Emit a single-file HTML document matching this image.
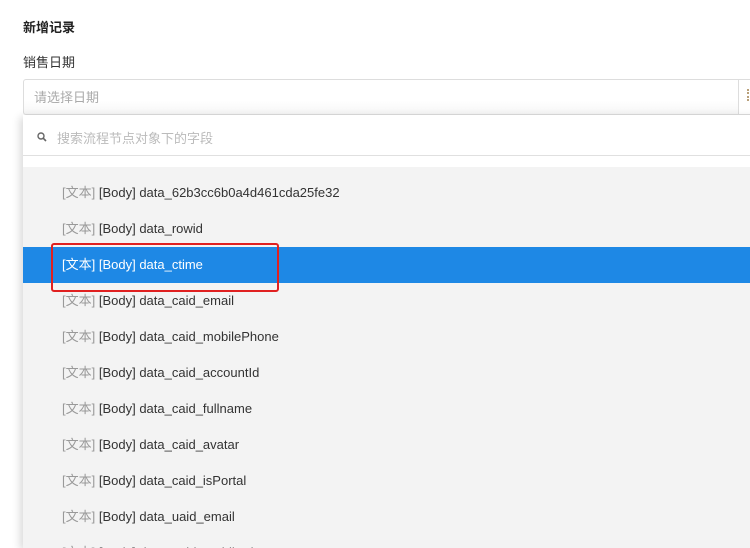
<!DOCTYPE html>
<html style="overflow:hidden"><head><meta charset="utf-8"><style>
*{margin:0;padding:0;box-sizing:border-box}
html,body{width:750px;height:548px;overflow:hidden}
body{background:#fff;font-family:"Liberation Sans","Noto Sans CJK SC",sans-serif;position:relative;color:#333}
.t{position:absolute;left:23px;top:17px;font-size:13px;font-weight:bold;color:#222}
.l{position:absolute;left:23px;top:52px;font-size:13px;color:#333}
.inp{position:absolute;left:23px;top:79px;width:716px;height:36px;border:1px solid #ddd;border-radius:3px 0 0 3px;background:linear-gradient(#fff 60%,#f6f6f6);font-size:13px;color:#aaa;padding:7px 10px}
.side{position:absolute;left:739px;top:79px;width:20px;height:36px;border-top:1px solid #ddd;border-bottom:1px solid #ddd}
.side i{position:absolute;left:8px;top:9px;width:3px;height:12px;border-left:2px dotted #b9a07a}
.dd{position:absolute;left:23px;top:115px;width:740px;height:433px;overflow:hidden;background:#f3f3f3;box-shadow:-3px 2px 8px rgba(0,0,0,.15)}
.sr{height:41px;background:#fff;border-bottom:1px solid #e0e0e0;font-size:13px;color:#bbb;padding:13px 0 0 34px;position:relative}
.sr svg{position:absolute;left:14px;top:17px}
.gap{height:11px;background:#fff}
.it{height:36px;line-height:36px;padding-left:39px;font-size:13px;color:#333}
.it span{color:#999}
.it.a{background:#1e88e5;color:#fff}
.it.a span{color:#fff}
.red{position:absolute;left:51px;top:243px;width:228px;height:49px;border:2px solid #e02020;border-radius:3px}
</style></head><body>
<div class="t">新增记录</div>
<div class="l">销售日期</div>
<div class="inp">请选择日期</div>
<div class="side"><i></i></div>
<div class="dd">
<div class="sr"><svg width="10" height="10" viewBox="0 0 10 10"><circle cx="4" cy="4" r="3" fill="none" stroke="#666" stroke-width="1.4"/><path d="M6.2 6.2L9 9" stroke="#666" stroke-width="1.6"/></svg>搜索流程节点对象下的字段</div>
<div class="gap"></div>
<div style="height:8px"></div>
<div class="it"><span>[文本]</span> [Body] data_62b3cc6b0a4d461cda25fe32</div>
<div class="it"><span>[文本]</span> [Body] data_rowid</div>
<div class="it a"><span>[文本]</span> [Body] data_ctime</div>
<div class="it"><span>[文本]</span> [Body] data_caid_email</div>
<div class="it"><span>[文本]</span> [Body] data_caid_mobilePhone</div>
<div class="it"><span>[文本]</span> [Body] data_caid_accountId</div>
<div class="it"><span>[文本]</span> [Body] data_caid_fullname</div>
<div class="it"><span>[文本]</span> [Body] data_caid_avatar</div>
<div class="it"><span>[文本]</span> [Body] data_caid_isPortal</div>
<div class="it"><span>[文本]</span> [Body] data_uaid_email</div>
<div class="it"><span>[文本]</span> [Body] data_uaid_mobilePhone</div>
</div>
<div class="red"></div>
</body></html>
